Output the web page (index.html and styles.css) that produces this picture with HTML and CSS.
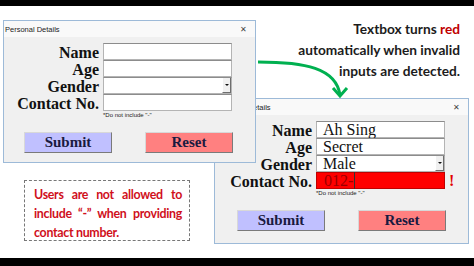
FILE: index.html
```html
<!DOCTYPE html>
<html lang="en">
<head>
  <meta charset="UTF-8" />
  <title>Textbox Validation</title>
  <link rel="stylesheet" href="styles.css">
</head>
<body>
  <div class="screen">
    <div class="bar bar-top"></div>

    <div class="canvas">
      <!-- back window: filled in, contact number invalid -->
      <div class="window window-back">
        <div class="titlebar">
          <span class="title">Personal Details</span>
          <span class="close">&#x2715;</span>
        </div>
        <div class="body">
          <div class="form">
            <label class="label">Name</label>
            <div class="field">Ah Sing</div>
            <label class="label">Age</label>
            <div class="field">Secret</div>
            <label class="label">Gender</label>
            <div class="field combo">Male<span class="drop"></span></div>
            <label class="label">Contact No.</label>
            <div class="field invalid"><span class="typed">012-</span></div>
            <span class="flag">!</span>
            <div class="hint">*Do not include "-"</div>
          </div>
          <div class="actions">
            <button class="btn btn-submit">Submit</button>
            <button class="btn btn-reset">Reset</button>
          </div>
        </div>
      </div>

      <!-- front window: empty form -->
      <div class="window window-front">
        <div class="titlebar">
          <span class="title">Personal Details</span>
          <span class="close">&#x2715;</span>
        </div>
        <div class="body">
          <div class="form">
            <label class="label">Name</label>
            <div class="field"></div>
            <label class="label">Age</label>
            <div class="field"></div>
            <label class="label">Gender</label>
            <div class="field combo"><span class="drop"></span></div>
            <label class="label">Contact No.</label>
            <div class="field"></div>
            <div class="hint">*Do not include "-"</div>
          </div>
          <div class="actions">
            <button class="btn btn-submit">Submit</button>
            <button class="btn btn-reset">Reset</button>
          </div>
        </div>
      </div>

      <svg class="arrow" width="474" height="252" viewBox="0 0 474 252">
        <path d="M258 56 C 305 56, 336 62, 340 89" fill="none" stroke="#00b050" stroke-width="3" />
        <path d="M333 82 L340 90 L347 82" fill="none" stroke="#00b050" stroke-width="3" stroke-linejoin="miter" />
      </svg>

      <p class="callout">
        Textbox turns <span class="hot">red</span><br>
        automatically when invalid<br>
        inputs are detected.
      </p>

      <div class="note">
        Users are not allowed to include &ldquo;-&rdquo; when providing contact number.
      </div>
    </div>

    <div class="bar bar-bottom"></div>
  </div>
</body>
</html>
```

FILE: styles.css
```css
body {
  margin: 0;
  background: #000;
  font-family: "Liberation Sans", Arial, sans-serif;
}

.screen {
  width: 474px;
  height: 266px;
  display: flex;
  flex-direction: column;
  overflow: hidden;
}

.bar {
  background: #000;
}

.bar-top {
  height: 6px;
}

.bar-bottom {
  height: 8px;
}

/* the sheet behind the forms */
.canvas {
  flex: 1;
  position: relative;
  background: #fff;
}

/* Windows */
.window {
  position: absolute;
  box-sizing: border-box;
  border: 1px solid #9dbad8;
  background: #f0f0f0;
}

.window-front {
  left: 3px;
  top: 14px;
  width: 253px;
  height: 143px;
  z-index: 2;
}

.window-back {
  left: 214px;
  top: 92px;
  width: 255px;
  height: 146px;
  z-index: 1;
}

.window-back .body {
  padding-left: 2px;
}

.titlebar {
  height: 16px;
  display: flex;
  justify-content: space-between;
  align-items: center;
  padding: 0 8px 0 1px;
  background: #f9f9f9;
}

.title {
  font-size: 7.5px;
  color: #222;
}

.close {
  font-size: 8px;
  color: #444;
}

.form {
  display: grid;
  grid-template-columns: 95px 129px 12px;
  grid-template-rows: repeat(4, 17px) auto;
  column-gap: 4px;
  margin-top: 6px;
}

.label {
  grid-column: 1;
  padding-top: 1px;
  text-align: right;
  font-family: "Liberation Serif", "Times New Roman", serif;
  font-weight: bold;
  font-size: 16px;
  line-height: 18px;
  color: #111;
}

.field {
  grid-column: 2;
  position: relative;
  box-sizing: border-box;
  background: #fff;
  border: 1px solid #b4b4b4;
  border-top-color: #8c8c8c;
  padding-left: 6px;
  font-family: "Liberation Serif", "Times New Roman", serif;
  font-size: 16px;
  line-height: 15px;
  color: #111;
}

.drop {
  position: absolute;
  right: 0;
  top: 0;
  bottom: 0;
  width: 9px;
  box-sizing: border-box;
  background: #f0f0f0;
  border-left: 1px solid #fff;
  border-right: 1px solid #6e6e6e;
  border-bottom: 1px solid #6e6e6e;
}

.drop::after {
  content: "";
  position: absolute;
  left: 2px;
  top: 6px;
  border-left: 2px solid transparent;
  border-right: 2px solid transparent;
  border-top: 2px solid #111;
}

.field.invalid {
  background: #ff0000;
  border-color: #c00000;
  color: #9a0000;
  padding-left: 7px;
}

.typed {
  border-right: 1px solid #333;
  padding-right: 1px;
}

.flag {
  grid-column: 3;
  font-family: "Liberation Serif", serif;
  font-weight: bold;
  font-size: 16px;
  line-height: 18px;
  color: #e00000;
}

.hint {
  grid-column: 2;
  font-size: 6px;
  line-height: 8px;
  color: #222;
}

.actions {
  display: flex;
  gap: 33px;
  margin-top: 13px;
  padding-left: 20px;
}

.btn {
  width: 88px;
  height: 21px;
  padding: 0;
  border: 1px solid #d8d8d8;
  border-right-color: #7a7a7a;
  border-bottom-color: #7a7a7a;
  font-family: "Liberation Serif", "Times New Roman", serif;
  font-weight: bold;
  font-size: 15px;
  color: #1a1a40;
}

.btn-submit {
  background: #c0c0ff;
}

.btn-reset {
  background: #ff8080;
}

.arrow {
  position: absolute;
  left: 0;
  top: 0;
  z-index: 3;
}

/* Annotations */
.callout {
  position: absolute;
  right: 14px;
  top: 12px;
  margin: 0;
  text-align: right;
  font-family: Lato, "Open Sans", sans-serif;
  font-weight: bold;
  font-size: 13.7px;
  line-height: 21px;
  color: #1c1c1c;
}

.hot {
  color: #c00000;
}

.note {
  position: absolute;
  left: 24px;
  top: 174px;
  width: 166px;
  height: 61px;
  box-sizing: border-box;
  border: 1px dashed #777;
  padding: 4px 7px 0 9px;
  text-align: justify;
  font-family: Lato, "Open Sans", sans-serif;
  font-weight: bold;
  font-size: 12.4px;
  letter-spacing: -0.3px;
  line-height: 19px;
  color: #d0101c;
}
```
